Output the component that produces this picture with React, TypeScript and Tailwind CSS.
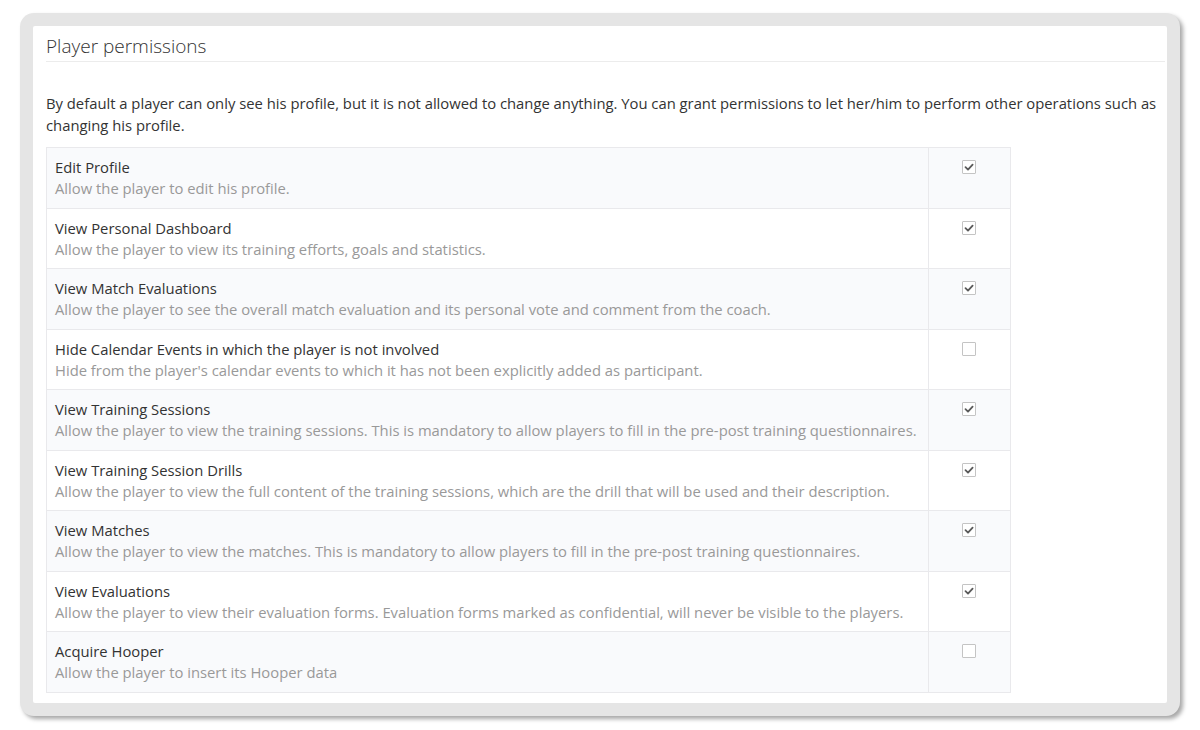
import React from "react";

type Permission = {
  title: string;
  description: string;
  checked: boolean;
};

const permissions: Permission[] = [
  { title: "Edit Profile", description: "Allow the player to edit his profile.", checked: true },
  {
    title: "View Personal Dashboard",
    description: "Allow the player to view its training efforts, goals and statistics.",
    checked: true,
  },
  {
    title: "View Match Evaluations",
    description: "Allow the player to see the overall match evaluation and its personal vote and comment from the coach.",
    checked: true,
  },
  {
    title: "Hide Calendar Events in which the player is not involved",
    description: "Hide from the player's calendar events to which it has not been explicitly added as participant.",
    checked: false,
  },
  {
    title: "View Training Sessions",
    description:
      "Allow the player to view the training sessions. This is mandatory to allow players to fill in the pre-post training questionnaires.",
    checked: true,
  },
  {
    title: "View Training Session Drills",
    description:
      "Allow the player to view the full content of the training sessions, which are the drill that will be used and their description.",
    checked: true,
  },
  {
    title: "View Matches",
    description: "Allow the player to view the matches. This is mandatory to allow players to fill in the pre-post training questionnaires.",
    checked: true,
  },
  {
    title: "View Evaluations",
    description:
      "Allow the player to view their evaluation forms. Evaluation forms marked as confidential, will never be visible to the players.",
    checked: true,
  },
  { title: "Acquire Hooper", description: "Allow the player to insert its Hooper data", checked: false },
];

const Checkbox: React.FC<{ checked: boolean }> = ({ checked }) => (
  <div className="w-[14px] h-[14px] border border-[#c4c4c4] bg-white rounded-[1px] flex items-center justify-center">
    {checked && (
      <svg width="12" height="12" viewBox="0 0 12 12">
        <path d="M2.5 6.2 L5 8.6 L9.6 3.6" fill="none" stroke="#5a5a5a" strokeWidth="1.8" strokeLinecap="round" strokeLinejoin="round" />
      </svg>
    )}
  </div>
);

const PermissionRow: React.FC<{ item: Permission; striped: boolean }> = ({ item, striped }) => (
  <div className={`flex border-t border-[#e9e9ec] ${striped ? "bg-[#f9fafc]" : "bg-white"}`}>
    <div className="w-[882px] pl-[8px] pt-[9px] pb-[8.5px] border-r border-[#e9e9ec] leading-[21px] whitespace-nowrap">
      <div className="text-[#333333]">{item.title}</div>
      <div className="text-[#999999]">{item.description}</div>
    </div>
    <div className="flex-1 flex justify-center pt-[12px] pr-[2px]">
      <Checkbox checked={item.checked} />
    </div>
  </div>
);

const App: React.FC = () => {
  return (
    <div className="w-[1200px] h-[730px] bg-white pt-[13px] pl-[20px] font-['Open_Sans',sans-serif] text-[14.8px]">
      <div className="w-[1160px] h-[703px] bg-[#e5e5e5] rounded-[14px] p-[13px] shadow-[3px_3px_4px_rgba(0,0,0,0.35)]">
        <div className="h-full bg-white rounded-[2px] pl-[13px] pr-[2px] overflow-hidden">
          <div className="pt-[6px] pb-[1px] border-b border-[#ececec]">
            <h1 className="text-[19px] leading-[28px] font-light text-[#333333]">Player permissions</h1>
          </div>
          <p className="mt-[30px] leading-[22px] text-[#333333] whitespace-nowrap">
            By default a player can only see his profile, but it is not allowed to change anything. You can grant
            permissions to let her/him to perform other operations such as
            <br />
            changing his profile.
          </p>
          <div className="mt-[11px] w-[965px] border-l border-r border-b border-[#e9e9ec]">
            {permissions.map((p, i) => (
              <PermissionRow key={p.title} item={p} striped={i % 2 === 0} />
            ))}
          </div>
        </div>
      </div>
    </div>
  );
};

export default App;
